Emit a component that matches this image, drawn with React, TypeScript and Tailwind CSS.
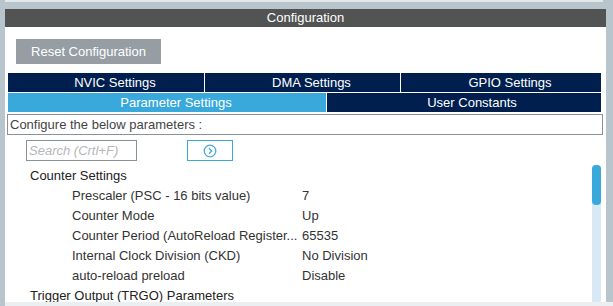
import React from "react";

const rows: [string, string][] = [
  ["Prescaler (PSC - 16 bits value)", "7"],
  ["Counter Mode", "Up"],
  ["Counter Period (AutoReload Register...", "65535"],
  ["Internal Clock Division (CKD)", "No Division"],
  ["auto-reload preload", "Disable"],
];

export default function App() {
  return (
    <div
      className="w-[613px] h-[306px] bg-[#b9c5cc] overflow-hidden relative"
      style={{ fontFamily: '"Liberation Sans", Arial, sans-serif' }}
    >
      <div className="ml-[5px] mr-[10px] h-[2px] bg-[#e3e8eb]" />
      <div className="h-[7px]" />
      <div className="ml-[5px] mr-[7px] flex flex-col h-[293px]">
        <div className="h-[18px] bg-[#515452] text-white text-[13px] leading-[18px] text-center">
          Configuration
        </div>
        <div className="flex-1 bg-white flex flex-col overflow-hidden">
          <div className="pl-[11px] pt-[12px]">
            <div className="w-[145px] h-[25px] bg-[#969ea4] text-white text-[13px] leading-[25px] text-center">
              Reset Configuration
            </div>
          </div>
          <div className="mt-[9px] ml-[3px] mr-[5px] flex flex-col gap-[1px]">
            <div className="flex gap-[1px] h-[19px]">
              <div className="w-[196px] bg-[#001f4f] text-white text-[13px] leading-[19px] text-center pl-[18px]">NVIC Settings</div>
              <div className="w-[195px] bg-[#001f4f] text-white text-[13px] leading-[19px] text-center pl-[18px]">DMA Settings</div>
              <div className="flex-1 bg-[#001f4f] text-white text-[13px] leading-[19px] text-center pl-[18px]">GPIO Settings</div>
            </div>
            <div className="flex gap-[1px] h-[19px]">
              <div className="w-[318px] bg-[#39a9dc] text-white text-[13px] leading-[19px] text-center pl-[18px]">Parameter Settings</div>
              <div className="flex-1 bg-[#001f4f] text-white text-[13px] leading-[19px] text-center pl-[16px]">User Constants</div>
            </div>
          </div>
          <div className="ml-[2px] mr-[2px] h-[2px] bg-[#39a9dc]" />
          <div className="ml-[2px] mr-[3px] mt-[2px] h-[21px] border border-[#8a9299] text-[13px] leading-[20px] text-[#444] pl-[2px]">
            Configure the below parameters :
          </div>
          <div className="flex items-center mt-[5px] pl-[21px]">
            <div className="w-[111px] h-[21px] border border-[#8a9299] text-[13px] leading-[19px] italic text-[#b4b8bb] pl-[2px]">
              Search (Crtl+F)
            </div>
            <div className="ml-[50px] w-[46px] h-[21px] border border-[#39a9dc] flex items-center justify-center">
              <svg width="14" height="14" viewBox="0 0 14 14">
                <circle cx="7" cy="7" r="5.8" fill="none" stroke="#4aa8de" strokeWidth="1.3" />
                <path d="M6 4.3 L8.6 7 L6 9.7" fill="none" stroke="#4aa8de" strokeWidth="1.4" />
              </svg>
            </div>
          </div>
          <div className="flex flex-1 mt-[4px]">
            <div className="flex-1 text-[13px] text-[#222] pt-[1px]">
              <div className="h-[20px] leading-[20px] pl-[25px]">Counter Settings</div>
              {rows.map(([k, v]) => (
                <div key={k} className="flex h-[20px] leading-[20px] text-[#333]">
                  <div className="w-[297px] pl-[67px] whitespace-nowrap">{k}</div>
                  <div>{v}</div>
                </div>
              ))}
              <div className="h-[20px] leading-[20px] pl-[25px]">Trigger Output (TRGO) Parameters</div>
            </div>
            <div className="w-[9px] mr-[5px] mb-[2px] bg-[#d8e8f5] rounded-[4px] relative">
              <div className="absolute top-0 left-0 w-[9px] h-[40px] bg-[#39a9dc] rounded-[4px]" />
            </div>
          </div>
        </div>
      </div>
      <div className="h-[4px] bg-[#eceff1] ml-[5px]" />
    </div>
  );
}
